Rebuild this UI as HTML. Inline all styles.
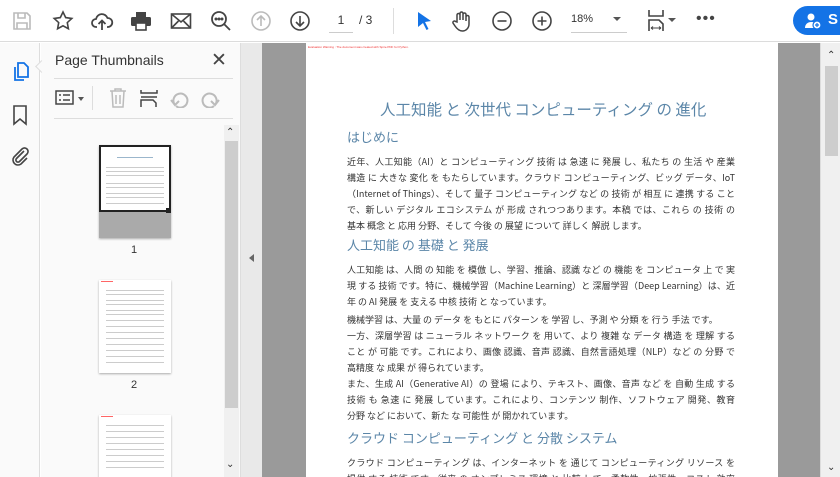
<!DOCTYPE html>
<html style="width:840px;height:477px;overflow:hidden"><head><meta charset="utf-8"><style>
*{margin:0;padding:0;box-sizing:border-box}
body{width:840px;height:477px;overflow:hidden;background:#fff;font-family:"Liberation Sans","Noto Sans CJK JP",sans-serif;position:relative}
.a{position:absolute}
.tb{left:0;top:0;width:840px;height:42px;background:#fff;border-bottom:1px solid #dcdcdc}
.ic{position:absolute;top:9px}
.page{left:306px;top:43px;width:472px;height:434px;background:#fff;overflow:hidden}
.l{position:absolute;left:41px;width:388px;font-size:9px;color:#333;text-align:justify;text-align-last:justify;white-space:nowrap;line-height:12px;font-family:"Noto Sans CJK JP",sans-serif}
.l.n{text-align-last:left}
.h{position:absolute;left:41px;color:#5b86a8;font-family:"Noto Sans CJK JP",sans-serif;white-space:nowrap}
.thumb{position:absolute;left:58px;width:72px;background:#fff;box-shadow:0 1px 2px #aaa;overflow:hidden}
.tl{position:absolute;left:7px;right:7px;height:1px;background:#ccc}
</style></head><body>
<div class="a tb">
<svg class="ic" style="left:10px" width="24" height="24" viewBox="0 0 24 24" fill="none" stroke="#bbb" stroke-width="1.6"><path d="M4 4h13l3 3v13H4z"/><path d="M8 4v5h7V4M7 20v-6h10v6"/></svg>
<svg class="ic" style="left:51px" width="24" height="24" viewBox="0 0 24 24" fill="none" stroke="#444" stroke-width="1.6"><path d="M12 3l2.7 5.6 6.1.8-4.5 4.2 1.1 6.1L12 16.8 6.6 19.7l1.1-6.1-4.5-4.2 6.1-.8z"/></svg>
<svg class="ic" style="left:90px" width="24" height="24" viewBox="0 0 24 24" fill="none" stroke="#444" stroke-width="1.8"><path d="M7 18H6a4 4 0 010-8 6 6 0 0111.5-1A4.5 4.5 0 0118 18h-1"/><path d="M12 21v-9M8.5 15l3.5-3.5 3.5 3.5"/></svg>
<svg class="ic" style="left:129px" width="24" height="24" viewBox="0 0 24 24" fill="#444"><rect x="7" y="3" width="10" height="5"/><rect x="2" y="8" width="20" height="9" rx="1.5"/><rect x="7" y="14" width="10" height="7" fill="#fff" stroke="#444" stroke-width="1.6"/></svg>
<svg class="ic" style="left:169px" width="24" height="24" viewBox="0 0 24 24" fill="none" stroke="#444" stroke-width="1.6"><rect x="2.5" y="5" width="19" height="14"/><path d="M2.5 5l9.5 8 9.5-8M2.5 19l7-7M21.5 19l-7-7"/></svg>
<svg class="ic" style="left:209px" width="24" height="24" viewBox="0 0 24 24" fill="none" stroke="#444" stroke-width="1.8"><circle cx="10" cy="10" r="7"/><path d="M15 15l6 6"/><circle cx="7" cy="10" r=".6" fill="#444"/><circle cx="10" cy="10" r=".6" fill="#444"/><circle cx="13" cy="10" r=".6" fill="#444"/></svg>
<svg class="ic" style="left:249px" width="24" height="24" viewBox="0 0 24 24" fill="none" stroke="#bbb" stroke-width="1.6"><circle cx="12" cy="12" r="9"/><path d="M12 17V7M8 11l4-4 4 4"/></svg>
<svg class="ic" style="left:288px" width="24" height="24" viewBox="0 0 24 24" fill="none" stroke="#444" stroke-width="1.6"><circle cx="12" cy="12" r="9"/><path d="M12 7v10M8 13l4 4 4-4"/></svg>
<div class="a" style="left:329px;top:13px;font-size:12px;color:#333;width:24px;text-align:center;border-bottom:1px solid #ccc;height:20px">1</div>
<div class="a" style="left:359px;top:13px;font-size:12px;color:#333">/ 3</div>
<div class="a" style="left:393px;top:8px;width:1px;height:26px;background:#ddd"></div>
<svg class="ic" style="left:412px" width="24" height="24" viewBox="0 0 24 24" fill="#1473e6"><path d="M6 3l13 9-6 1 3.5 7-2 1-3.5-7L6 18z"/></svg>
<svg class="ic" style="left:450px" width="24" height="24" viewBox="0 0 24 24" fill="none" stroke="#444" stroke-width="1.5"><path d="M7 13V6a1.5 1.5 0 013 0v5V4.5a1.5 1.5 0 013 0V11V5.5a1.5 1.5 0 013 0V12V8a1.5 1.5 0 013 0v7c0 4-3 7-6.5 7S7 20 5 17l-2-3a1.5 1.5 0 012.5-1.5z"/></svg>
<svg class="ic" style="left:490px" width="24" height="24" viewBox="0 0 24 24" fill="none" stroke="#444" stroke-width="1.6"><circle cx="12" cy="12" r="9"/><path d="M7.5 12h9"/></svg>
<svg class="ic" style="left:530px" width="24" height="24" viewBox="0 0 24 24" fill="none" stroke="#444" stroke-width="1.6"><circle cx="12" cy="12" r="9"/><path d="M7.5 12h9M12 7.5v9"/></svg>
<div class="a" style="left:571px;top:13px;font-size:11px;color:#333;width:56px;border-bottom:1px solid #ccc;height:20px">18%<span style="position:absolute;left:42px;top:4px;border:4px solid transparent;border-top:4px solid #555"></span></div>
<svg class="ic" style="left:645px" width="24" height="24" viewBox="0 0 24 24" fill="none" stroke="#444" stroke-width="1.6"><path d="M4 1v6h14V1M4 22V11h10l4 4v7"/><path d="M6 19h10M6 19l2-1.5M6 19l2 1.5M16 19l-2-1.5M16 19l-2 1.5" stroke-width="1"/></svg>
<div class="a" style="left:668px;top:18px;border:4px solid transparent;border-top:4px solid #555"></div>
<div class="a" style="left:696px;top:10px;font-size:16px;color:#444;letter-spacing:1px">•••</div>
<div class="a" style="left:793px;top:6px;width:70px;height:29px;border-radius:15px;background:#1473e6"></div>
<svg class="a" style="left:804px;top:12px" width="18" height="18" viewBox="0 0 18 18" fill="#fff"><circle cx="7" cy="5" r="3.5"/><path d="M1 16c0-4 3-6 6-6s4 1 4 1v5z"/><circle cx="13" cy="13" r="4" stroke="#1473e6" stroke-width="1.2"/><path d="M13 11v4M11 13h4" stroke="#1473e6" stroke-width="1.2"/></svg>
<div class="a" style="left:828px;top:11px;font-size:15px;color:#fff;font-weight:bold">S</div>
</div>
<div class="a" style="left:0;top:43px;width:40px;height:434px;background:#fafafa;border-right:1px solid #ddd"></div>
<svg class="a" style="left:10px;top:60px" width="22" height="24" viewBox="0 0 22 24" fill="none" stroke="#1473e6" stroke-width="1.8"><path d="M8 3h6l4 4v10H8z"/><path d="M5 7v13h9"/></svg>
<svg class="a" style="left:11px;top:104px" width="18" height="22" viewBox="0 0 18 22" fill="none" stroke="#444" stroke-width="1.6"><path d="M3 2h12v18l-6-5-6 5z"/></svg>
<svg class="a" style="left:9px;top:145px" width="22" height="22" viewBox="0 0 22 22" fill="none" stroke="#444" stroke-width="1.6"><path d="M15 6l-7.5 7.5a2 2 0 003 3L18 9a3.5 3.5 0 00-5-5L5 12a5 5 0 007 7l6-6"/></svg>
<div class="a" style="left:41px;top:43px;width:199px;height:434px;background:#fafafa;overflow:hidden">
<div class="thumb" style="left:58px;top:102px;height:93px;background:#aaa"><div style="position:absolute;left:0;top:0;width:72px;height:67px;background:#fff;border:2px solid #222"></div>
<div class="tl" style="top:12px;left:18px;right:18px;background:#9bb6cc"></div><div class="tl" style="top:22px"></div><div class="tl" style="top:26px"></div><div class="tl" style="top:30px"></div><div class="tl" style="top:38px"></div><div class="tl" style="top:42px"></div><div class="tl" style="top:48px"></div><div class="tl" style="top:52px"></div><div class="tl" style="top:58px"></div>
<div style="position:absolute;left:67px;top:63px;width:5px;height:5px;background:#222"></div></div>
<div class="thumb" style="left:58px;top:237px;height:93px"><div class="tl" style="top:1px;left:2px;right:58px;background:#f66"></div><div class="tl" style="top:10px"></div><div class="tl" style="top:14px"></div><div class="tl" style="top:20px"></div><div class="tl" style="top:24px"></div><div class="tl" style="top:30px"></div><div class="tl" style="top:34px"></div><div class="tl" style="top:40px"></div><div class="tl" style="top:46px"></div><div class="tl" style="top:52px"></div><div class="tl" style="top:58px"></div><div class="tl" style="top:64px"></div><div class="tl" style="top:70px"></div><div class="tl" style="top:76px"></div><div class="tl" style="top:82px"></div></div>
<div class="thumb" style="left:58px;top:372px;height:70px"><div class="tl" style="top:1px;left:2px;right:58px;background:#f66"></div><div class="tl" style="top:10px"></div><div class="tl" style="top:16px"></div><div class="tl" style="top:22px"></div><div class="tl" style="top:28px"></div><div class="tl" style="top:34px"></div><div class="tl" style="top:40px"></div><div class="tl" style="top:46px"></div><div class="tl" style="top:52px"></div></div>
</div>
<div class="a" style="left:37px;top:62px;width:9px;height:9px;background:#fafafa;border-left:1px solid #ddd;border-bottom:1px solid #ddd;transform:rotate(45deg)"></div>
<div class="a" style="left:55px;top:52px;font-size:14px;color:#333">Page Thumbnails</div>
<div class="a" style="left:211px;top:49px;font-size:19px;color:#444">✕</div>
<div class="a" style="left:54px;top:78px;width:179px;height:1px;background:#ddd"></div>
<div class="a" style="left:54px;top:118px;width:179px;height:1px;background:#ddd"></div>
<svg class="a" style="left:55px;top:90px" width="20" height="16" viewBox="0 0 20 16" fill="none" stroke="#444" stroke-width="1.5"><rect x="1" y="1" width="17" height="13"/><path d="M4 5h2M8 5h7M4 10h2M8 10h7"/></svg>
<div class="a" style="left:78px;top:97px;border:3.5px solid transparent;border-top:4px solid #555"></div>
<div class="a" style="left:92px;top:86px;width:1px;height:24px;background:#ddd"></div>
<svg class="a" style="left:108px;top:87px" width="20" height="22" viewBox="0 0 20 22" fill="none" stroke="#bbb" stroke-width="1.5"><path d="M2 4h16M7 4V2h6v2M4 4l1 16h10l1-16M8 8v9M12 8v9"/></svg>
<svg class="a" style="left:139px;top:88px" width="20" height="20" viewBox="0 0 20 20" fill="none" stroke="#444" stroke-width="1.5"><path d="M2 2v3h16V2M2 9h16M2 19v-7h12l3 3v4"/></svg>
<svg class="a" style="left:169px;top:88px" width="22" height="20" viewBox="0 0 22 20" fill="none" stroke="#bbb" stroke-width="2"><path d="M6 17a7 7 0 111 1"/><path d="M2 12l4 5 4-4"/></svg>
<svg class="a" style="left:199px;top:88px" width="22" height="20" viewBox="0 0 22 20" fill="none" stroke="#bbb" stroke-width="2"><path d="M16 17a7 7 0 10-1 1"/><path d="M20 12l-4 5-4-4"/></svg>
<div class="a" style="left:131px;top:244px;font-size:11px;color:#333">1</div>
<div class="a" style="left:131px;top:379px;font-size:11px;color:#333">2</div>
<div class="a" style="left:224px;top:125px;width:15px;height:352px;background:#f0f0f0"></div>
<div class="a" style="left:225px;top:141px;width:13px;height:267px;background:#cdcdcd"></div>
<div class="a" style="left:226px;top:127px;font-size:10px;color:#333">⌃</div>
<div class="a" style="left:226px;top:459px;font-size:10px;color:#333">⌄</div>
<div class="a" style="left:240px;top:43px;width:22px;height:434px;background:#e9e9e9;border-left:1px solid #ddd"></div>
<div class="a" style="left:249px;top:254px;border:4px solid transparent;border-right:5px solid #666;border-left:0"></div>
<div class="a" style="left:262px;top:43px;width:558px;height:434px;background:#9a9a9a"></div>
<div class="a page">
<div class="a" style="left:2px;top:2px;font-size:3px;color:#e33;white-space:nowrap">Evaluation Warning : The document was created with Spire.PDF for Python.</div>
<div class="h" style="top:55px;left:74px;font-size:15.5px">人工知能 と 次世代 コンピューティング の 進化</div>
<div class="h" style="top:84px;font-size:13px">はじめに</div>
<div class="l" style="top:113px">近年、人工知能（AI）と コンピューティング 技術 は 急速 に 発展 し、私たち の 生活 や 産業</div>
<div class="l" style="top:129px">構造 に 大きな 変化 を もたらしています。クラウド コンピューティング、ビッグ データ、IoT</div>
<div class="l" style="top:145px">（Internet of Things）、そして 量子 コンピューティング など の 技術 が 相互 に 連携 する こと</div>
<div class="l" style="top:161px">で、新しい デジタル エコシステム が 形成 されつつあります。本稿 では、これら の 技術 の</div>
<div class="l n" style="top:177px">基本 概念 と 応用 分野、そして 今後 の 展望 について 詳しく 解説 します。</div>
<div class="h" style="top:192px;font-size:13px">人工知能 の 基礎 と 発展</div>
<div class="l" style="top:221px">人工知能 は、人間 の 知能 を 模倣 し、学習、推論、認識 など の 機能 を コンピュータ 上 で 実</div>
<div class="l" style="top:237px">現 する 技術 です。特に、機械学習（Machine Learning）と 深層学習（Deep Learning）は、近</div>
<div class="l n" style="top:253px">年 の AI 発展 を 支える 中核 技術 と なっています。</div>
<div class="l n" style="top:271px">機械学習 は、大量 の データ を もとに パターン を 学習 し、予測 や 分類 を 行う 手法 です。</div>
<div class="l" style="top:287px">一方、深層学習 は ニューラル ネットワーク を 用いて、より 複雑 な データ 構造 を 理解 する</div>
<div class="l" style="top:303px">こと が 可能 です。これにより、画像 認識、音声 認識、自然言語処理（NLP）など の 分野 で</div>
<div class="l n" style="top:319px">高精度 な 成果 が 得られています。</div>
<div class="l" style="top:335px">また、生成 AI（Generative AI）の 登場 により、テキスト、画像、音声 など を 自動 生成 する</div>
<div class="l" style="top:351px">技術 も 急速 に 発展 しています。これにより、コンテンツ 制作、ソフトウェア 開発、教育</div>
<div class="l n" style="top:367px">分野 など において、新た な 可能性 が 開かれています。</div>
<div class="h" style="top:385px;font-size:13px">クラウド コンピューティング と 分散 システム</div>
<div class="l" style="top:414px">クラウド コンピューティング は、インターネット を 通じて コンピューティング リソース を</div>
<div class="l" style="top:430px">提供 する 技術 です。従来 の オンプレミス 環境 と 比較 して、柔軟性、拡張性、コスト 効率</div>
</div>
<div class="a" style="left:820px;top:43px;width:20px;height:434px;background:#f0f0f0;border-left:1px solid #ddd"></div>
<div class="a" style="left:825px;top:66px;width:13px;height:90px;background:#cdcdcd"></div>
<div class="a" style="left:827px;top:50px;font-size:10px;color:#333">⌃</div>
<div class="a" style="left:827px;top:462px;font-size:10px;color:#333">⌄</div>
</body></html>
